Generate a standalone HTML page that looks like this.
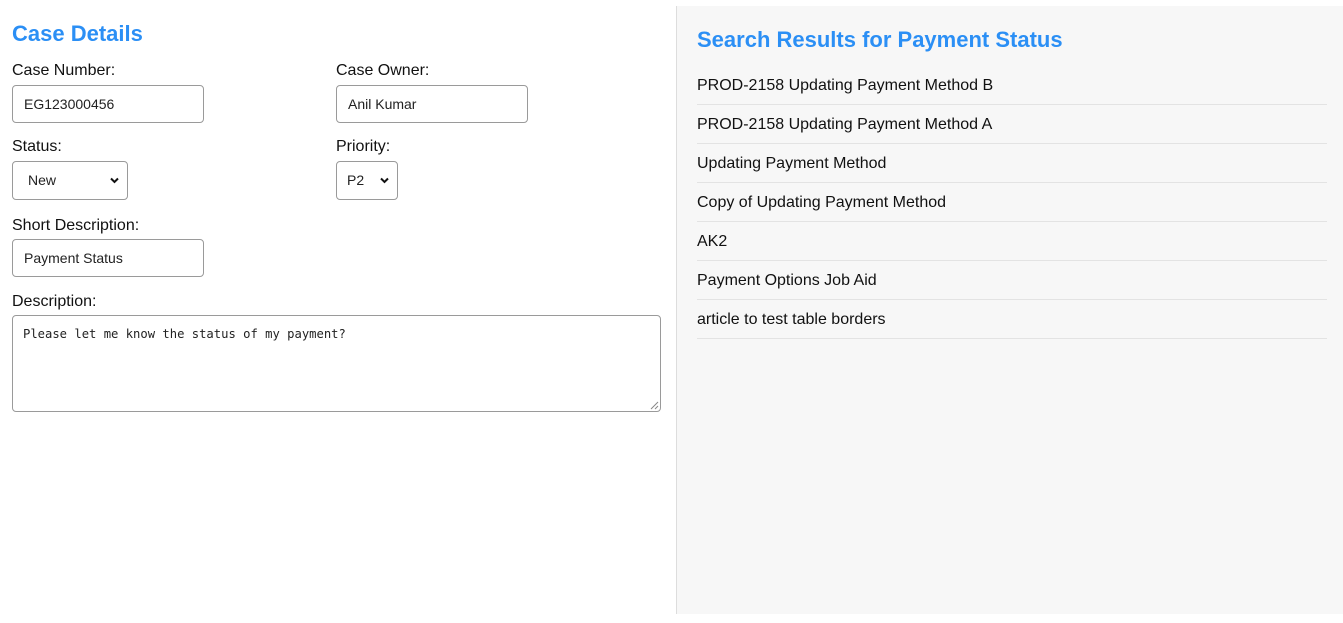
<!DOCTYPE html>
<html><head><style>
body{margin:0;width:1343px;height:623px;background:#fff;font-family:"Liberation Sans",Arial,sans-serif;position:relative;overflow:hidden;color:#111}
.a{position:absolute}
h2{position:absolute;margin:0;font-size:22px;font-weight:bold;color:#2b8ff5}
.lbl{position:absolute;font-size:16px;line-height:18px}
.inp{position:absolute;box-sizing:border-box;border:1px solid #9a9a9a;border-radius:4px;background:#fff;font-size:14px;color:#222;padding-left:11px;line-height:36px}
.sel svg{position:absolute;right:8px;top:15px}
#right{position:absolute;left:676px;top:6px;width:667px;height:608px;background:#f7f7f7;border-left:1px solid #ddd}
.item{position:absolute;left:20px;width:630px;height:38px;border-bottom:1px solid #e3e3e3;font-size:16px;line-height:40px}
</style></head><body>
<h2 style="left:12px;top:21px">Case Details</h2>
<div class="lbl" style="left:12px;top:62px">Case Number:</div>
<div class="lbl" style="left:336px;top:62px">Case Owner:</div>
<div class="inp" style="left:12px;top:85px;width:192px;height:38px">EG123000456</div>
<div class="inp" style="left:336px;top:85px;width:192px;height:38px">Anil Kumar</div>
<div class="lbl" style="left:12px;top:138px">Status:</div>
<div class="lbl" style="left:336px;top:138px">Priority:</div>
<div class="inp sel" style="left:12px;top:161px;width:116px;height:39px;padding-left:15px">New<svg width="9" height="7" viewBox="0 0 9 7"><path d="M1 1.5L4.5 5L8 1.5" stroke="#111" stroke-width="2" fill="none"/></svg></div>
<div class="inp sel" style="left:336px;top:161px;width:62px;height:39px;padding-left:10px">P2<svg width="9" height="7" viewBox="0 0 9 7"><path d="M1 1.5L4.5 5L8 1.5" stroke="#111" stroke-width="2" fill="none"/></svg></div>
<div class="lbl" style="left:12px;top:217px">Short Description:</div>
<div class="inp" style="left:12px;top:239px;width:192px;height:38px">Payment Status</div>
<div class="lbl" style="left:12px;top:293px">Description:</div>
<div class="inp" style="left:12px;top:315px;width:649px;height:97px;font-family:'DejaVu Sans Mono','Liberation Mono',monospace;font-size:12.2px;line-height:16px;padding-top:10px;padding-left:10px">Please let me know the status of my payment?
<svg class="a" style="right:1px;bottom:1px" width="10" height="10"><path d="M9 2L2 9M9 6L6 9" stroke="#888" stroke-width="1"/></svg></div>
<div id="right">
<h2 style="left:20px;top:21px">Search Results for Payment Status</h2>
<div class="item" style="top:60px">PROD-2158 Updating Payment Method B</div>
<div class="item" style="top:99px">PROD-2158 Updating Payment Method A</div>
<div class="item" style="top:138px">Updating Payment Method</div>
<div class="item" style="top:177px">Copy of Updating Payment Method</div>
<div class="item" style="top:216px">AK2</div>
<div class="item" style="top:255px">Payment Options Job Aid</div>
<div class="item" style="top:294px">article to test table borders</div>
</div>
</body></html>
